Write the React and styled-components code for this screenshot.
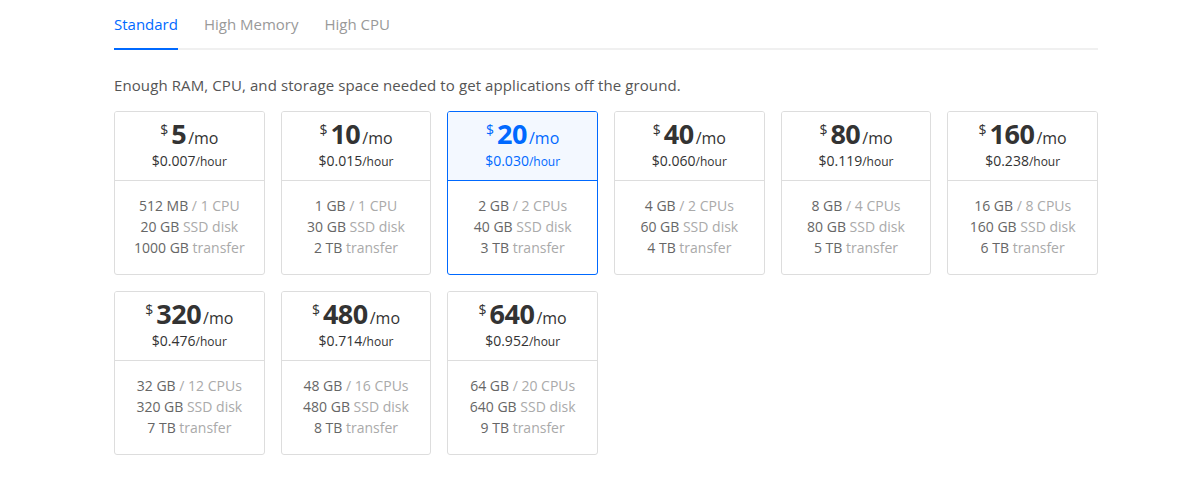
import React from "react";
import styled, { createGlobalStyle } from "styled-components";

const plans = [
  { mo: 5, hr: "0.007", ram: "512 MB", cpu: "1 CPU", disk: "20 GB", transfer: "1000 GB" },
  { mo: 10, hr: "0.015", ram: "1 GB", cpu: "1 CPU", disk: "30 GB", transfer: "2 TB" },
  { mo: 20, hr: "0.030", ram: "2 GB", cpu: "2 CPUs", disk: "40 GB", transfer: "3 TB", selected: true },
  { mo: 40, hr: "0.060", ram: "4 GB", cpu: "2 CPUs", disk: "60 GB", transfer: "4 TB" },
  { mo: 80, hr: "0.119", ram: "8 GB", cpu: "4 CPUs", disk: "80 GB", transfer: "5 TB" },
  { mo: 160, hr: "0.238", ram: "16 GB", cpu: "8 CPUs", disk: "160 GB", transfer: "6 TB" },
  { mo: 320, hr: "0.476", ram: "32 GB", cpu: "12 CPUs", disk: "320 GB", transfer: "7 TB" },
  { mo: 480, hr: "0.714", ram: "48 GB", cpu: "16 CPUs", disk: "480 GB", transfer: "8 TB" },
  { mo: 640, hr: "0.952", ram: "64 GB", cpu: "20 CPUs", disk: "640 GB", transfer: "9 TB" },
];

const tabs = ["Standard", "High Memory", "High CPU"];

const App = () => {
  return (
    <Page>
      <GlobalStyle />
      <Tabs>
        {tabs.map((t, i) => (
          <Tab key={t} active={i === 0}>
            {t}
          </Tab>
        ))}
      </Tabs>
      <Description>
        Enough RAM, CPU, and storage space needed to get applications off the ground.
      </Description>
      <Grid>
        {plans.map((p) => (
          <Card key={p.mo} selected={p.selected}>
            <PriceBox selected={p.selected}>
              <Monthly>
                <Dollar>$</Dollar>
                <Amount>{p.mo}</Amount>
                <Per>/mo</Per>
              </Monthly>
              <Hourly>
                ${p.hr}
                <HourUnit>/hour</HourUnit>
              </Hourly>
            </PriceBox>
            <Specs>
              <Spec>
                {p.ram} <Light>/ {p.cpu}</Light>
              </Spec>
              <Spec>
                {p.disk} <Light>SSD disk</Light>
              </Spec>
              <Spec>
                {p.transfer} <Light>transfer</Light>
              </Spec>
            </Specs>
          </Card>
        ))}
      </Grid>
    </Page>
  );
};

export default App;

const GlobalStyle = createGlobalStyle`
  body {
    margin: 0;
    background: #ffffff;
    font-family: "Open Sans", "Liberation Sans", sans-serif;
  }
`;

const Page = styled.div`
  width: 984px;
  margin-left: 114px;
  padding-top: 14px;
`;

const Tabs = styled.div`
  display: flex;
  gap: 26px;
  border-bottom: 2px solid #f0f0f0;
`;

const Tab = styled.div`
  font-size: 15px;
  line-height: 20px;
  padding-bottom: 14px;
  margin-bottom: -2px;
  color: ${(p) => (p.active ? "#0069ff" : "#999999")};
  border-bottom: 2px solid ${(p) => (p.active ? "#0069ff" : "transparent")};
`;

const Description = styled.p`
  margin: 24px 0 15px;
  font-size: 15px;
  line-height: 22px;
  letter-spacing: 0.1px;
  color: #555555;
`;

const Grid = styled.div`
  display: grid;
  grid-template-columns: repeat(6, 1fr);
  column-gap: 16px;
  row-gap: 16px;
`;

const Card = styled.div`
  display: flex;
  flex-direction: column;
  height: 164px;
  box-sizing: border-box;
  border: 1px solid ${(p) => (p.selected ? "#0069ff" : "#dddddd")};
  border-radius: 3px;
  overflow: hidden;
  color: #333333;
`;

const PriceBox = styled.div`
  height: 69px;
  box-sizing: border-box;
  display: flex;
  flex-direction: column;
  align-items: center;
  justify-content: center;
  padding-bottom: 2px;
  background: ${(p) => (p.selected ? "#f3f8ff" : "#ffffff")};
  border-bottom: 1px solid ${(p) => (p.selected ? "#0069ff" : "#dddddd")};
  color: ${(p) => (p.selected ? "#0069ff" : "#333333")};
`;

const Monthly = styled.div`
  display: flex;
  align-items: baseline;
  line-height: 28px;
`;

const Dollar = styled.span`
  font-size: 14px;
  align-self: flex-start;
  line-height: 20px;
  margin-right: 3px;
`;

const Amount = styled.span`
  font-size: 27px;
  font-weight: 700;
  letter-spacing: -0.5px;
`;

const Per = styled.span`
  font-size: 16px;
  margin-left: 2px;
`;

const Hourly = styled.div`
  font-size: 14px;
  line-height: 18px;
`;

const HourUnit = styled.span`
  font-size: 12px;
`;

const Specs = styled.div`
  flex: 1;
  display: flex;
  flex-direction: column;
  align-items: center;
  justify-content: center;
  padding-bottom: 2px;
`;

const Spec = styled.div`
  font-size: 14px;
  line-height: 21px;
  color: #666666;
`;

const Light = styled.span`
  color: #aaaaaa;
`;
